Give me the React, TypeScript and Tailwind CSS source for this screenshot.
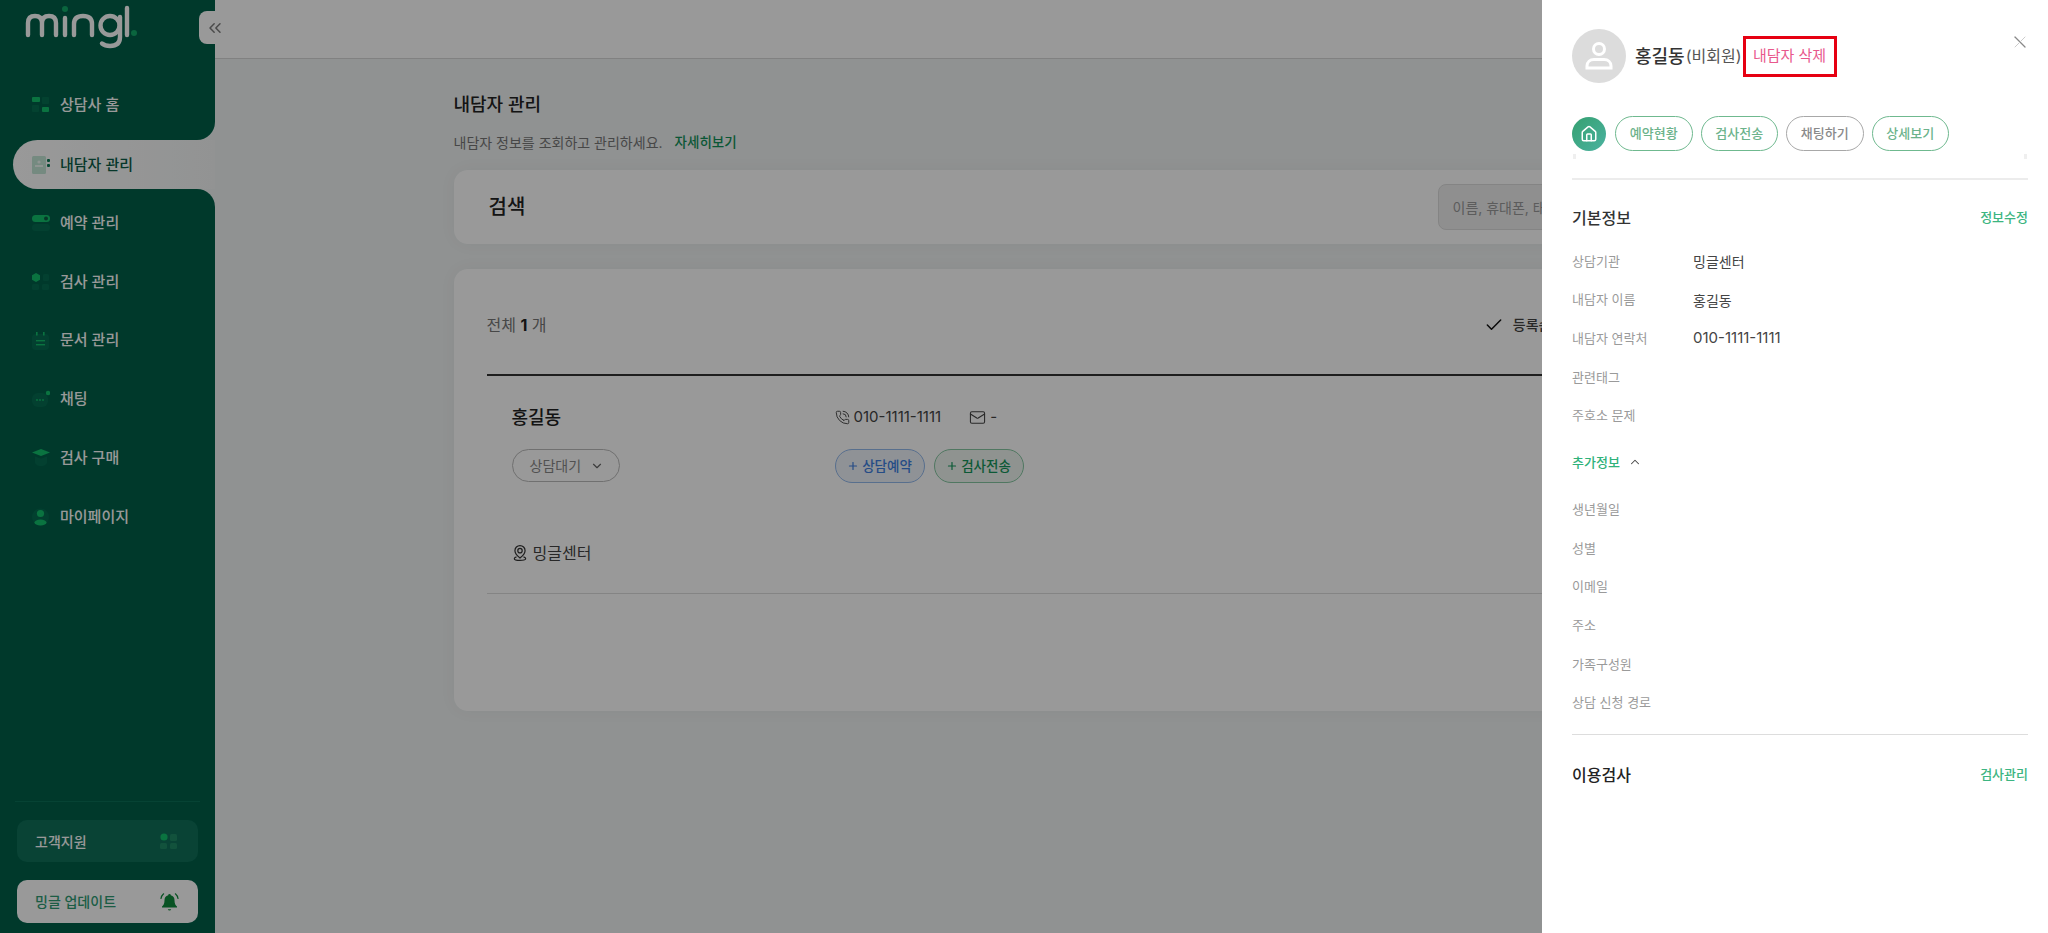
import React from 'react'
import { Check, ChevronDown, ChevronUp, ChevronsLeft, House, Mail, PhoneCall, Plus } from 'lucide-react'

const bright = '#12c06c'
const dim = '#0b7d5a'

function NavIcon({ name }: { name: string }) {
  return (
    <svg width="18" height="18" viewBox="0 0 18 18" className="shrink-0">
      {name === 'home' && (
        <>
          <rect x="0" y="1" width="8" height="5" rx="1" fill={bright} />
          <rect x="10" y="1" width="7" height="7" rx="1" fill={dim} opacity=".5" />
          <rect x="0" y="9" width="7" height="7" rx="1" fill={dim} opacity=".5" />
          <rect x="10" y="11" width="7" height="5" rx="1" fill={bright} />
        </>
      )}
      {name === 'client' && (
        <>
          <rect x="0" y="0" width="14" height="18" rx="1.5" fill="#c3e6d6" />
          <circle cx="7" cy="6" r="1.6" fill="#eef8f3" />
          <rect x="3" y="9" width="8" height="2" fill="#eef8f3" />
          <rect x="15" y="3" width="3" height="3" rx="1" fill="#0c7a55" />
          <rect x="15" y="8" width="3" height="3" rx="1" fill="#0c7a55" />
        </>
      )}
      {name === 'reserve' && (
        <>
          <rect x="0" y="1" width="18" height="7" rx="3.5" fill={bright} />
          <circle cx="14" cy="4.5" r="2" fill="#0a5a44" />
          <rect x="0" y="10" width="18" height="7" rx="3.5" fill={dim} opacity=".45" />
        </>
      )}
      {name === 'test' && (
        <>
          <path d="M4 0l4 2.2v4.6L4 9 0 6.8V2.2z" fill={bright} />
          <rect x="11" y="1" width="6" height="7" rx="1.5" fill={dim} opacity=".45" />
          <rect x="0" y="11" width="7" height="6" rx="1.5" fill={dim} opacity=".45" />
          <rect x="10" y="11" width="7" height="6" rx="1.5" fill={dim} opacity=".45" />
        </>
      )}
      {name === 'doc' && (
        <>
          <rect x="0" y="2" width="17" height="16" rx="4" fill={dim} opacity=".45" />
          <rect x="4" y="0" width="1.6" height="3.5" fill={bright} />
          <rect x="11" y="0" width="1.6" height="3.5" fill={bright} />
          <rect x="4" y="8" width="9" height="1.4" fill={bright} />
          <rect x="4" y="12" width="9" height="1.4" fill={bright} />
        </>
      )}
      {name === 'chat' && (
        <>
          <rect x="0" y="3" width="16" height="14" rx="6" fill={dim} opacity=".45" />
          <circle cx="5" cy="10" r=".9" fill={bright} />
          <circle cx="8" cy="10" r=".9" fill={bright} />
          <circle cx="11" cy="10" r=".9" fill={bright} />
          <circle cx="16" cy="3" r="2.2" fill={bright} />
        </>
      )}
      {name === 'buy' && (
        <>
          <path d="M9 0l9 3.5L9 7 0 3.5z" fill={bright} />
          <path d="M3 7.5l6 2.2 6-2.2V13c0 2.5-3 4-6 4s-6-1.5-6-4z" fill={dim} opacity=".45" />
        </>
      )}
      {name === 'my' && (
        <>
          <circle cx="8.5" cy="9" r="8.5" fill={dim} opacity=".4" />
          <circle cx="8.5" cy="5.5" r="3.6" fill={bright} />
          <ellipse cx="8.5" cy="14.5" rx="6" ry="3" fill={bright} />
        </>
      )}
    </svg>
  )
}

function NavItem({ icon, label }: { icon: string; label: string }) {
  return (
    <div className="h-[58.700px] pl-[32px] flex items-center gap-[10px] text-white text-[15px] font-medium">
      <NavIcon name={icon} />
      <span>{label}</span>
    </div>
  )
}

function Logo() {
  return (
    <svg width="120" height="46" viewBox="24 4 120 46" className="block" fill="none" stroke="#fff" strokeWidth="4.4" strokeLinecap="round">
      <path d="M28 34V22Q28 15 35 15Q42 15 42 22V34M42 22Q42 15 49 15Q56 15 56 22V34" />
      <path d="M65 17V34" />
      <path d="M74 34V23Q74 15 83 15Q92 15 92 23V34" />
      <circle cx="110" cy="24.5" r="9.5" />
      <path d="M120 16V36Q120 45 110 45Q105 45 102 42.500" />
      <path d="M127 7V34" />
      <circle cx="65" cy="8" r="3" fill="#12a868" stroke="none" />
      <circle cx="134" cy="32" r="3" fill="#12a868" stroke="none" />
    </svg>
  )
}

function Sidebar() {
  return (
    <aside className="relative w-[215px] shrink-0 h-full flex flex-col bg-[#f0f3f3]">
      <div className="h-[140px] bg-[#006049] rounded-br-[18px] flex flex-col">
        <div className="h-[76px] pl-[24px] pt-[5px]">
          <Logo />
        </div>
        <NavItem icon="home" label="상담사 홈" />
      </div>

      <div className="bg-[#006049] pl-[13px]">
        <div className="h-[49px] rounded-l-full bg-gradient-to-r from-[#ffffff] to-[#f4f6f6] pl-[19px] pt-[1px] flex items-center gap-[10px] text-[15px] font-medium text-[#0b5c47]">
          <NavIcon name="client" />
          <span>내담자 관리</span>
        </div>
      </div>

      <div className="flex-1 bg-[#006049] rounded-tr-[18px] pt-[5px] flex flex-col">
        <NavItem icon="reserve" label="예약 관리" />
        <NavItem icon="test" label="검사 관리" />
        <NavItem icon="doc" label="문서 관리" />
        <NavItem icon="chat" label="채팅" />
        <NavItem icon="buy" label="검사 구매" />
        <NavItem icon="my" label="마이페이지" />

        <div className="mt-auto px-[15px]">
          <div className="h-px bg-[#0b7058]" />
        </div>
        <div className="mt-[18px] mx-[17px] h-[42px] rounded-[10px] bg-[#0f7059] pl-[18px] pr-[20px] flex items-center justify-between text-white text-[14px] font-medium">
          <span>고객지원</span>
          <svg width="18" height="18" viewBox="0 0 18 18">
            <circle cx="4" cy="5" r="3.6" fill={bright} />
            <rect x="10" y="2" width="7" height="7" rx="1.5" fill="#2a9a6e" opacity=".6" />
            <rect x="0" y="11" width="7" height="6" rx="1.5" fill="#2a9a6e" opacity=".6" />
            <rect x="10" y="11" width="7" height="6" rx="1.5" fill="#2a9a6e" opacity=".6" />
          </svg>
        </div>
        <div className="mt-[18px] mb-[10px] mx-[17px] h-[43px] rounded-[10px] bg-white pl-[18px] pr-[19px] flex items-center justify-between text-[#2f9b73] text-[14px] font-medium">
          <span>밍글 업데이트</span>
          <svg width="19" height="20" viewBox="0 0 19 20" className="text-[#0f8a3c]">
            <path d="M9.500 2a1.300 1.300 0 0 1 1.300 1.300 5 5 0 0 1 3.700 4.900c0 3.600 1 4.800 2.500 6.300v1h-15v-1C3.500 13 4.500 11.800 4.500 8.200a5 5 0 0 1 3.700-4.900A1.300 1.300 0 0 1 9.500 2z" fill="currentColor" />
            <path d="M7.800 17.200a1.800 1.800 0 0 0 3.400 0z" fill="currentColor" />
            <path d="M3.600 1.800A8 8 0 0 0 1 6.500M15.400 1.800A8 8 0 0 1 18 6.500" stroke="currentColor" strokeWidth="1.200" fill="none" strokeLinecap="round" />
          </svg>
        </div>
      </div>

      <div className="absolute left-[199px] top-[11px] w-[36px] h-[33px] rounded-l-[8px] bg-white flex items-center pl-[6px] text-[#7d7d7d]">
        <ChevronsLeft size={20} strokeWidth={1.8} />
      </div>
    </aside>
  )
}

function ClientList() {
  return (
    <div className="mt-[25px] h-[442px] rounded-[14px] bg-white shadow-[0_0_18px_rgba(0,0,0,0.04)] pl-[33px]">
      <div className="h-[107px] border-b-2 border-[#333] pt-[6px] flex items-center justify-between pr-[258px]">
        <span className="text-[16px] text-[#777]">
          전체 <b className="font-bold text-[#222]">1</b> 개
        </span>
        <span className="flex items-center gap-[9px] text-[14px] font-medium text-[#444]">
          <Check size={20} strokeWidth={1.8} className="text-[#111]" />
          등록순
        </span>
      </div>

      <div className="pl-[25px] border-b border-[#ddd] h-[218px] flex flex-col">
        <div className="mt-[23px] flex">
          <div className="w-[323px]">
            <div className="h-[36px] flex items-center text-[18px] font-medium text-[#222]">홍길동</div>
            <div className="mt-[14px] w-[108px] h-[33px] rounded-full border border-[#bbb] flex items-center pl-[17px] gap-[9px] text-[14px] text-[#888]">
              상담대기
              <ChevronDown size={14} strokeWidth={2} className="text-[#666]" />
            </div>
          </div>
          <div>
            <div className="h-[36px] flex items-center text-[15px] text-[#444]">
              <PhoneCall size={15} strokeWidth={1.5} />
              <span className="ml-[4px]">010-1111-1111</span>
              <Mail size={17} strokeWidth={1.5} className="ml-[28px]" />
              <span className="ml-[4px]">-</span>
            </div>
            <div className="mt-[14px] flex gap-[9px]">
              <div className="w-[90px] h-[34px] rounded-full border border-[#93b9ec] bg-[#eef3fb] flex items-center justify-center gap-[3px] text-[13.500px] font-medium text-[#3e7fe0]">
                <Plus size={12} strokeWidth={2.4} />
                상담예약
              </div>
              <div className="w-[90px] h-[34px] rounded-full border border-[#86c7a2] bg-[#eef6f1] flex items-center justify-center gap-[3px] text-[13.500px] font-medium text-[#15955a]">
                <Plus size={12} strokeWidth={2.4} />
                검사전송
              </div>
            </div>
          </div>
        </div>
        <div className="mt-[58px] flex items-center gap-[6px] text-[16px] text-[#444]">
          <svg width="14" height="20" viewBox="0 0 16 20" fill="none" stroke="#333" strokeWidth="1.400" className="ml-[1px]">
            <path d="M8 1.500a5.800 5.800 0 0 1 5.800 5.800c0 3.200-3.400 6.400-5.800 8.400-2.400-2-5.800-5.200-5.800-8.400A5.800 5.800 0 0 1 8 1.500z" />
            <circle cx="8" cy="7.300" r="2.500" />
            <path d="M4 14.500c-1.700.5-2.500 1.200-2.500 2 0 1.300 3 2 6.500 2s6.500-.7 6.500-2c0-.8-.8-1.500-2.500-2" />
          </svg>
          밍글센터
        </div>
      </div>
    </div>
  )
}

function Row({ label, value, number }: { label: string; value?: string; number?: boolean }) {
  return (
    <div className="h-[38.700px] grid grid-cols-[121px_1fr] items-center">
      <span className="text-[13px] text-[#9a9a9a]">{label}</span>
      {value && <span className={`text-[#444] ${number ? 'text-[15px]' : 'text-[14px]'}`}>{value}</span>}
    </div>
  )
}

function Pill({ label, gray }: { label: string; gray?: boolean }) {
  return (
    <div
      className={`w-[77.500px] h-[35px] rounded-full border flex items-center justify-center text-[13px] font-medium ${
        gray ? 'border-[#a8a8a8] text-[#8a8a8a]' : 'border-[#6fb98f] text-[#6cb38b]'
      }`}
    >
      {label}
    </div>
  )
}

function Drawer() {
  return (
    <div className="fixed top-0 right-0 bottom-0 w-[506px] bg-white pl-[30px] pr-[20px] pt-[29px]">
      <div className="flex items-center h-[54px]">
        <div className="w-[54px] h-[54px] rounded-full bg-[#dcdcdc] flex items-center justify-center">
          <svg width="34" height="34" viewBox="0 0 34 34" fill="none" stroke="#fff" strokeWidth="3">
            <circle cx="17" cy="10" r="5.500" />
            <path d="M5 29v-2c0-4 3-6.500 7-6.500h10c4 0 7 2.500 7 6.500v2z" />
          </svg>
        </div>
        <span className="ml-[9px] text-[18px] font-medium text-[#333]">홍길동</span>
        <span className="ml-[1px] text-[16px] text-[#555]">(비회원)</span>
        <div className="ml-[1px] w-[94px] h-[41px] border-[3px] border-[#e60012] flex items-center justify-center text-[15px] text-[#e8588c]">
          내담자 삭제
        </div>
        <svg width="12" height="12" viewBox="0 0 12 12" className="ml-auto mr-[2px] self-start mt-[7px]" fill="none" strokeLinecap="round">
          <path d="M1 1l10 10" stroke="#888" strokeWidth="1.300" />
          <path d="M11 1L1 11" stroke="#ccc" strokeWidth="1" />
        </svg>
      </div>

      <div className="mt-[33px] flex items-center gap-[8px]">
        <div className="w-[34px] h-[34px] mr-[1px] rounded-full bg-gradient-to-br from-[#35a070] to-[#4bb2a0] flex items-center justify-center text-white">
          <House size={18} strokeWidth={2} />
        </div>
        <Pill label="예약현황" />
        <Pill label="검사전송" />
        <Pill label="채팅하기" gray />
        <Pill label="상세보기" />
      </div>

      <div className="mt-[3px] h-[5px] px-[1px] flex justify-between">
        <span className="w-[3px] h-[5px] bg-[#efefef]" />
        <span className="w-[3px] h-[5px] bg-[#efefef]" />
      </div>

      <div className="mt-[19px] h-[2px] bg-[#ececec]" />

      <div className="mt-[26px] h-[24px] flex items-center justify-between">
        <span className="text-[16px] font-medium text-[#333]">기본정보</span>
        <span className="text-[13px] font-medium text-[#3cb581]">정보수정</span>
      </div>

      <div className="mt-[12px]">
        <Row label="상담기관" value="밍글센터" />
        <Row label="내담자 이름" value="홍길동" />
        <Row label="내담자 연락처" value="010-1111-1111" number />
        <Row label="관련태그" />
        <Row label="주호소 문제" />
      </div>

      <div className="mt-[15px] h-[24px] flex items-center gap-[8px] text-[13px] font-medium text-[#2fb27a]">
        추가정보
        <ChevronUp size={14} strokeWidth={1.8} className="text-[#444]" />
      </div>

      <div className="mt-[16px]">
        <Row label="생년월일" />
        <Row label="성별" />
        <Row label="이메일" />
        <Row label="주소" />
        <Row label="가족구성원" />
        <Row label="상담 신청 경로" />
      </div>

      <div className="mt-[11px] h-px bg-[#ddd]" />

      <div className="mt-[28px] h-[24px] flex items-center justify-between">
        <span className="text-[16px] font-medium text-[#222]">이용검사</span>
        <span className="text-[13px] font-medium text-[#3cb581]">검사관리</span>
      </div>
    </div>
  )
}

export default function App() {
  return (
    <div className="h-screen overflow-hidden flex bg-[#f0f3f3] font-['Inter','Noto_Sans_CJK_KR',sans-serif]">
      <Sidebar />
      <main className="flex-1 min-w-0">
        <div className="h-[59px] bg-white border-b border-[#d8d8d8]" />
        <div className="w-[1356px] mx-auto">
          <h1 className="mt-[32px] h-[26px] flex items-center text-[18px] font-medium text-[#222]">내담자 관리</h1>
          <p className="mt-[15px] h-[20px] flex items-center gap-[12px] text-[14px] text-[#777]">
            내담자 정보를 조회하고 관리하세요.
            <span className="text-[13.500px] font-medium text-[#12925a]">자세히보기</span>
          </p>
          <div className="mt-[18px] h-[74px] rounded-[14px] bg-white shadow-[0_0_18px_rgba(0,0,0,0.04)] pl-[35px] pr-[24px] flex items-center justify-between">
            <span className="text-[20px] font-medium text-[#222]">검색</span>
            <div className="w-[348px] h-[46px] rounded-[8px] border border-[#ddd] bg-[#eeeeee] pl-[14px] flex items-center text-[14px] text-[#999]">
              이름, 휴대폰, 태
            </div>
          </div>
          <ClientList />
        </div>
      </main>
      <div className="fixed inset-0 bg-black/40" />
      <Drawer />
    </div>
  )
}
